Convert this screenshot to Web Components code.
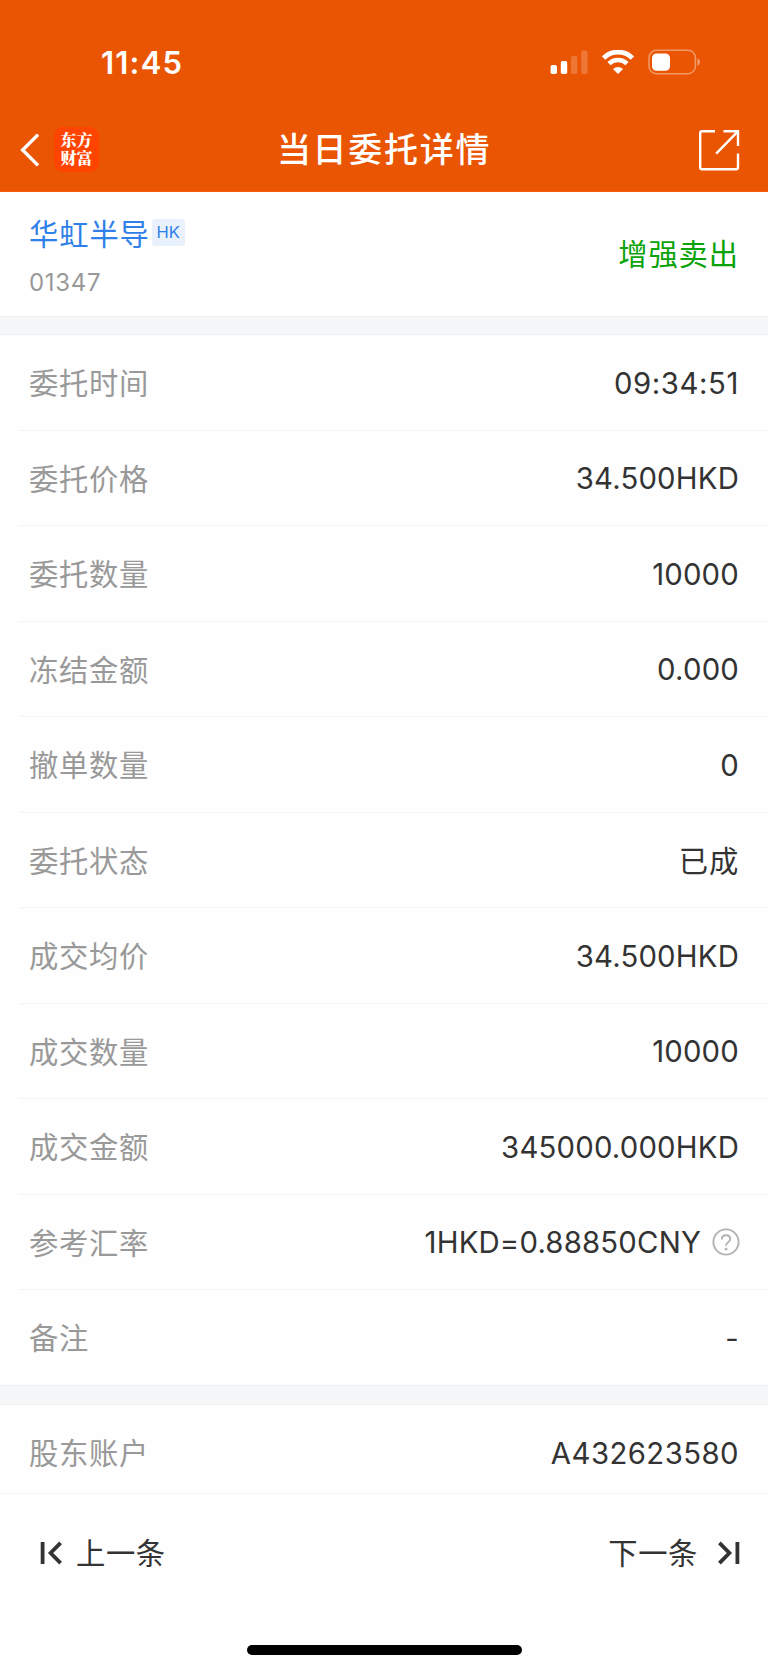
<!DOCTYPE html>
<html lang="zh-CN">
<head>
<meta charset="utf-8">
<title>当日委托详情</title>
<style>
  body {
    margin: 0;
    background: #fefefe;
    color: #333;
    font-family: Inter, "Noto Sans CJK SC", sans-serif;
    font-size: 29.3px;
  }
</style>
</head>
<body>
<order-page>
  <status-bar slot="header" time="11:45"></status-bar>
  <nav-bar slot="header">当日委托详情</nav-bar>

  <stock-summary code="01347" market="HK">
    华虹半导
    <span slot="side">增强卖出</span>
  </stock-summary>
  <section-gap></section-gap>
  <detail-row label="委托时间" class="time">09:34:51</detail-row>
  <detail-row label="委托价格">34.500HKD</detail-row>
  <detail-row label="委托数量">10000</detail-row>
  <detail-row label="冻结金额">0.000</detail-row>
  <detail-row label="撤单数量">0</detail-row>
  <detail-row label="委托状态" class="cjk">已成</detail-row>
  <detail-row label="成交均价">34.500HKD</detail-row>
  <detail-row label="成交数量">10000</detail-row>
  <detail-row label="成交金额">345000.000HKD</detail-row>
  <detail-row label="参考汇率">1HKD=0.88850CNY<help-icon slot="extra"></help-icon></detail-row>
  <detail-row label="备注" class="last">-</detail-row>
  <section-gap class="tall"></section-gap>
  <detail-row label="股东账户" class="account">A432623580</detail-row>

  <pager-bar slot="footer">
    <span slot="prev">上一条</span>
    <span slot="next">下一条</span>
  </pager-bar>
</order-page>

<script>
function define(name, html, setup) {
  const template = document.createElement("template");
  template.innerHTML = html;
  customElements.define(name, class extends HTMLElement {
    constructor() {
      super();
      this.attachShadow({ mode: "open" });
      this.shadowRoot.appendChild(template.content.cloneNode(true));
      if (setup) setup(this, this.shadowRoot);
    }
  });
}

define("order-page", `
<style>
  :host {
    display: flex;
    flex-direction: column;
    width: 768px;
    height: 1670px;
    overflow: hidden;
  }
  header {
    box-sizing: border-box;
    height: 192px;
    background: #ea5504;
    border-bottom: 1px solid #fb5a0c;
  }
  main {
    height: 1302px;
  }
</style>
<header><slot name="header"></slot></header>
<main><slot></slot></main>
<slot name="footer"></slot>
`);

define("status-bar", `
<style>
  :host {
    display: flex;
    justify-content: space-between;
    align-items: center;
    height: 106px;
    padding: 19px 67px 0 101px;
    box-sizing: border-box;
    color: #fff;
  }
  .time {
    font-size: 31px;
    font-weight: 600;
    letter-spacing: 1.2px;
  }
  .icons {
    display: flex;
    align-items: center;
    gap: 14px;
    padding-bottom: 1px;
  }
  svg {
    display: block;
  }
</style>
<span class="time"></span>
<div class="icons">
  <svg width="38" height="24" viewBox="0 0 38 24" fill="#fff">
    <rect x="0.6" y="15" width="6.4" height="9" rx="1.8"/>
    <rect x="10.8" y="11" width="6.4" height="13" rx="1.8"/>
    <rect x="21" y="6" width="6.4" height="18" rx="1.8" opacity="0.2"/>
    <rect x="31.2" y="0.6" width="6.4" height="23.4" rx="1.8" opacity="0.2"/>
  </svg>
  <svg width="32" height="24" viewBox="0 0 32 24">
    <path d="M1.6 8 A20.5 20.5 0 0 1 30.4 8" fill="none" stroke="#fff" stroke-width="4.8"/>
    <path d="M7 13.7 A12.8 12.8 0 0 1 25 13.7" fill="none" stroke="#fff" stroke-width="4.5"/>
    <path d="M16 24 L11 18.9 Q16 14.9 21 18.9 Z" fill="#fff"/>
  </svg>
  <svg width="53" height="26" viewBox="0 0 53 26">
    <rect x="1" y="1.3" width="46.4" height="23.4" rx="7.4" fill="none" stroke="#fff" stroke-width="1.5" opacity="0.4"/>
    <rect x="4" y="4.4" width="18" height="17.4" rx="4.6" fill="#fff"/>
    <path d="M49.5 9.3 Q52 10.5 52 13 Q52 15.5 49.5 16.7 Z" fill="#fff" opacity="0.45"/>
  </svg>
</div>
`, (el, root) => {
  root.querySelector(".time").textContent = el.getAttribute("time");
});

define("nav-bar", `
<style>
  :host {
    display: grid;
    grid-template-columns: 1fr auto 1fr;
    align-items: center;
    box-sizing: border-box;
    height: 85px;
    padding: 2px 28px 0 20px;
    color: #fff;
  }
  .left {
    display: flex;
    align-items: center;
    gap: 15px;
  }
  .logo {
    width: 45px;
    height: 45px;
    box-sizing: border-box;
    padding-top: 4px;
    border-radius: 9px;
    background: #ff4400;
    font: 900 16px/18px "Noto Serif CJK SC", "Noto Sans CJK SC", sans-serif;
    text-align: center;
  }
  .title {
    padding: 1px 0 0 8px;
    font-size: 34px;
    font-weight: 500;
    letter-spacing: 1.7px;
    line-height: 50px;
  }
  .share {
    justify-self: end;
  }
  svg {
    display: block;
  }
</style>
<div class="left">
  <svg width="19" height="34" viewBox="0 0 19 34" fill="none" stroke="#fff" stroke-width="3.4">
    <path d="M18 1.6 L2.6 17 L18 32.4"/>
  </svg>
  <div class="logo"><div>东方</div><div>财富</div></div>
</div>
<div class="title"><slot></slot></div>
<svg class="share" width="42" height="42" viewBox="0 0 42 42" fill="none" stroke="#fff" stroke-width="2.4">
  <path d="M17 2.2 H4.2 Q2.2 2.2 2.2 4.2 V38.2 Q2.2 40.2 4.2 40.2 H38 Q40 40.2 40 38.2 V24.5"/>
  <path d="M25.5 2.2 H40 V17"/>
  <path d="M39.4 2.8 L18.2 24.6"/>
</svg>
`);

define("stock-summary", `
<style>
  :host {
    display: flex;
    justify-content: space-between;
    align-items: center;
    box-sizing: border-box;
    height: 124px;
    padding: 0 29px 0 29px;
    background: #fff;
  }
  .name {
    display: flex;
    align-items: center;
    padding-top: 6px;
    color: #2f80e8;
    letter-spacing: 0.9px;
    line-height: 40px;
  }
  .market {
    margin: -5px 0 0 2px;
    width: 33px;
    border-radius: 3px;
    background: #e9f2fc;
    font-size: 16.5px;
    line-height: 27px;
    letter-spacing: 0;
    text-align: center;
  }
  .code {
    margin-top: 11px;
    color: #999;
    font-size: 24px;
    line-height: 34px;
    letter-spacing: 0.7px;
  }
  .side {
    padding-bottom: 5px;
    color: #0aa30a;
    letter-spacing: 0.9px;
  }
</style>
<div>
  <div class="name"><slot></slot><span class="market"></span></div>
  <div class="code"></div>
</div>
<div class="side"><slot name="side"></slot></div>
`, (el, root) => {
  root.querySelector(".market").textContent = el.getAttribute("market");
  root.querySelector(".code").textContent = el.getAttribute("code");
});

define("section-gap", `
<style>
  :host {
    display: block;
    box-sizing: border-box;
    height: 19px;
    background: #f6f7f9;
    border: 1px solid #eeeff0;
    border-width: 1px 0;
  }
  :host(.tall) {
    height: 20px;
  }
</style>
`);

define("detail-row", `
<style>
  :host {
    display: block;
    padding-left: 19px;
  }
  .row {
    display: flex;
    justify-content: space-between;
    align-items: center;
    box-sizing: border-box;
    height: 95.5px;
    padding: 0 29px 0 10px;
    border-bottom: 1px solid #f4f4f4;
  }
  .label {
    padding-bottom: 2px;
    color: #999;
    letter-spacing: 0.7px;
  }
  .value {
    display: flex;
    align-items: center;
    gap: 12px;
    padding-top: 2px;
    letter-spacing: 0.2px;
  }
  :host(.time) .value {
    letter-spacing: 0.6px;
  }
  :host(.cjk) .value {
    padding: 0 0 2px;
    letter-spacing: 0.8px;
  }
  :host(.last) .row {
    height: 94.5px;
    border-bottom: 0;
  }
  :host(.account) {
    padding-left: 0;
  }
  :host(.account) .row {
    height: 89px;
    padding: 7px 29px 0 29px;
  }
  :host(.account) .value {
    letter-spacing: 0.45px;
  }
</style>
<div class="row">
  <span class="label"></span>
  <span class="value"><slot></slot><slot name="extra"></slot></span>
</div>
`, (el, root) => {
  root.querySelector(".label").textContent = el.getAttribute("label");
});

define("help-icon", `
<style>
  :host {
    display: block;
    margin: -2px -1px 0 -1px;
  }
  svg {
    display: block;
  }
</style>
<svg width="28" height="28" viewBox="0 0 28 28" fill="none" stroke="#b3b3b3">
  <circle cx="14" cy="14" r="12.6" stroke-width="1.9"/>
  <path d="M9.8 11.4 Q9.8 7.3 14 7.3 Q18.2 7.3 18.2 11 Q18.2 12.8 16.2 14.2 Q14 15.6 14 17.8" stroke-width="1.9"/>
  <circle cx="14" cy="20.9" r="1.5" fill="#b3b3b3" stroke="none"/>
</svg>
`);

define("pager-bar", `
<style>
  :host {
    display: flex;
    flex-direction: column;
    align-items: center;
    height: 176px;
  }
  .links {
    display: flex;
    justify-content: space-between;
    align-self: stretch;
    height: 117px;
    padding: 0 28px 0 40px;
    letter-spacing: 0.6px;
  }
  .link {
    display: flex;
    align-items: center;
  }
  .prev {
    gap: 14px;
  }
  .next {
    gap: 20px;
  }
  ::slotted(span) {
    padding-bottom: 3px;
  }
  .home {
    width: 275px;
    height: 10px;
    margin-top: 34px;
    border-radius: 5px;
    background: #000;
  }
</style>
<div class="links">
  <div class="link prev">
    <svg width="22" height="24" viewBox="0 0 22 24" fill="none" stroke="#333" stroke-width="3.8">
      <path d="M2.6 1 V23"/>
      <path d="M20.6 1.8 L10.6 12 L20.6 22.2"/>
    </svg>
    <slot name="prev"></slot>
  </div>
  <div class="link next">
    <slot name="next"></slot>
    <svg width="22" height="24" viewBox="0 0 22 24" fill="none" stroke="#333" stroke-width="3.8">
      <path d="M19.4 1 V23"/>
      <path d="M1.4 1.8 L11.4 12 L1.4 22.2"/>
    </svg>
  </div>
</div>
<div class="home"></div>
`);
</script>
</body>
</html>
